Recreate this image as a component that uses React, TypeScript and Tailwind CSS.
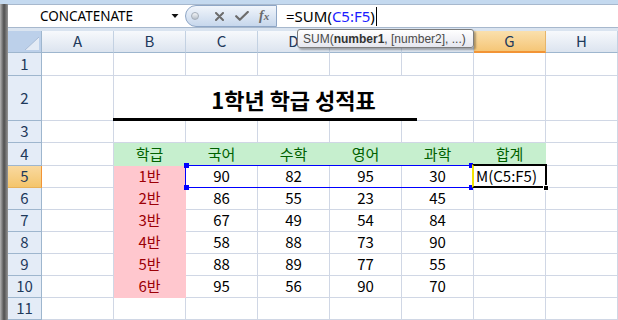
import React from 'react';

const cols = ['A', 'B', 'C', 'D', 'E', 'F', 'G', 'H'];
const subjects = ['학급', '국어', '수학', '영어', '과학', '합계'];
const scores: [string, number, number, number, number][] = [
  ['1반', 90, 82, 95, 30],
  ['2반', 86, 55, 23, 45],
  ['3반', 67, 49, 54, 84],
  ['4반', 58, 88, 73, 90],
  ['5반', 88, 89, 77, 55],
  ['6반', 95, 56, 90, 70],
];

type Tone = 'green' | 'pink' | undefined;

function Cell({ children, tone, className = '' }: { children?: React.ReactNode; tone?: Tone; className?: string }) {
  const toneCls =
    tone === 'green'
      ? 'bg-[#c6efce] text-[#006100] border-[#c6efce]'
      : tone === 'pink'
        ? 'bg-[#ffc7ce] text-[#9c0006] border-[#ffc7ce]'
        : 'bg-white text-black border-[#d0d7e5]';
  return (
    <div className={`flex items-center justify-center overflow-visible whitespace-nowrap border-r border-b ${toneCls} ${className}`}>
      {children}
    </div>
  );
}

function RowHead({ n, active }: { n: number; active?: boolean }) {
  return (
    <div
      className={`flex items-center justify-center border-r border-b text-[#1e395b] ${
        active
          ? 'bg-linear-to-b from-[#f9d99f] to-[#f4c56b] border-r-[#f29436] border-b-[#e8b25a]'
          : 'bg-[#e4ecf7] border-r-[#9eb6ce] border-b-[#9eb6ce]'
      }`}
    >
      {n}
    </div>
  );
}

export default function App() {
  return (
    <div className="relative h-[320px] w-[618px] overflow-hidden bg-[#dae4f0] font-['Noto_Sans_CJK_KR',sans-serif] text-[15px] select-none">
      <div className="h-[4px] bg-[#c4d9ef]" />
      <div className="flex h-[316px]">
        {/* window frame */}
        <div className="w-[8px] shrink-0 bg-linear-to-r from-[#b5b5b5] via-[#505050] to-[#979797]" />

        <div className="flex w-[610px] flex-col">
          {/* Formula bar */}
          <div className="flex h-[24px] shrink-0 border-y border-[#a7b8cd] bg-white">
            <div className="flex w-[177px] items-center">
              <span className="w-[157px] text-center font-['Noto_Sans',sans-serif] text-[13.5px] text-black">CONCATENATE</span>
              <svg width="20" height="6" viewBox="0 0 20 6">
                <path d="M6.5 1h7l-3.5 4z" fill="#111" />
              </svg>
            </div>
            <div className="flex h-full w-[92px] items-center rounded-l-full border border-[#8ea6c6] bg-linear-to-b from-[#f1f5fb] to-[#c7d7ec]">
              <span className="ml-[5px] h-[8px] w-[8px] rounded-full border border-[#a4adb8] bg-linear-to-b from-[#f4f6f8] to-[#b7c0ca]" />
              <svg className="ml-[16px]" width="9" height="9" viewBox="0 0 9 9">
                <path d="M1 1l7 7M8 1l-7 7" stroke="#6c6c6c" strokeWidth="2" strokeLinecap="round" />
              </svg>
              <svg className="ml-[11px]" width="14" height="10" viewBox="0 0 14 10">
                <path d="M1.2 5.2l3.6 3.6L12.8 1" stroke="#6c6c6c" strokeWidth="2.2" fill="none" strokeLinecap="round" strokeLinejoin="round" />
              </svg>
              <span className="ml-[10px] font-['Liberation_Serif',serif] text-[14px] italic font-bold leading-none text-[#6a6a6a]">
                f<span className="text-[11px]">x</span>
              </span>
            </div>
            <div className="flex flex-1 items-center pl-[9px] font-['Noto_Sans',sans-serif] text-[15px] text-black">
              =SUM(<span className="text-[#1c1cff]">C5:F5</span>)
              <span className="ml-[1px] h-[19px] w-[1px] bg-black" />
            </div>
          </div>
          <div className="h-[3px] shrink-0" />

          {/* Sheet */}
          <div className="relative grid grid-cols-[34px_repeat(8,72px)] grid-rows-[22px_23px_45px_22px_23px_repeat(7,22px)]">
            {/* corner */}
            <div className="relative border-r border-b border-r-[#9eb6ce] border-b-[#9eb6ce] bg-[#bcd0ea]">
              <svg className="absolute right-[2px] bottom-[2px]" width="14" height="13" viewBox="0 0 14 13">
                <path d="M14 0v13H0z" fill="#e4ebf5" />
                <path d="M14 0L0 13" stroke="#a9bcd6" strokeWidth="1" />
              </svg>
            </div>
            {cols.map((c) =>
              c === 'G' ? (
                <div
                  key={c}
                  className="flex items-center justify-center border-r border-b-2 border-r-[#e6b56a] border-b-[#f29436] bg-linear-to-b from-[#fae0ad] to-[#f5c677] text-[#1e395b]"
                >
                  {c}
                </div>
              ) : (
                <div
                  key={c}
                  className="flex items-center justify-center border-r border-b border-r-[#c3d1e2] border-b-[#9eb6ce] bg-linear-to-b from-[#f7f9fc] to-[#dce4ef] text-[#1e395b]"
                >
                  {c}
                </div>
              ),
            )}

            {/* Row 1 */}
            <RowHead n={1} />
            {cols.map((c) => (
              <Cell key={'1' + c} />
            ))}

            {/* Row 2 */}
            <RowHead n={2} />
            <Cell />
            <Cell className="relative col-span-5 pt-[2px] text-[22px] font-bold">
              1학년 학급 성적표
              <div className="absolute left-[-1px] bottom-[-1px] h-[3px] w-[304px] bg-black" />
            </Cell>
            <Cell />
            <Cell />

            {/* Row 3 */}
            <RowHead n={3} />
            {cols.map((c) => (
              <Cell key={'3' + c} />
            ))}

            {/* Row 4 */}
            <RowHead n={4} />
            <Cell />
            {subjects.map((s) => (
              <Cell key={s} tone="green">
                {s}
              </Cell>
            ))}
            <Cell />

            {/* Rows 5-10 */}
            {scores.map((r, i) => (
              <React.Fragment key={r[0]}>
                <RowHead n={i + 5} active={i === 0} />
                <Cell />
                <Cell tone="pink">{r[0]}</Cell>
                <Cell>{r[1]}</Cell>
                <Cell>{r[2]}</Cell>
                <Cell>{r[3]}</Cell>
                <Cell>{r[4]}</Cell>
                {i === 0 ? <Cell className="justify-start! pl-[2px]">M(C5:F5)</Cell> : <Cell />}
                <Cell />
              </React.Fragment>
            ))}

            {/* Row 11 */}
            <RowHead n={11} />
            {cols.map((c) => (
              <Cell key={'11' + c} />
            ))}

            {/* range reference highlight C5:F5 */}
            <div className="absolute left-[177px] top-[134px] h-[23px] w-[289px] border border-[#0000ff]" />
            <div className="absolute left-[176px] top-[132px] h-[5px] w-[5px] bg-[#0000ff]" />
            <div className="absolute left-[176px] top-[154px] h-[5px] w-[5px] bg-[#0000ff]" />
            <div className="absolute left-[461px] top-[132px] h-[5px] w-[4px] bg-[#0000ff]" />
            <div className="absolute left-[461px] top-[154px] h-[5px] w-[4px] bg-[#0000ff]" />

            {/* active cell G5 */}
            <div className="absolute left-[464px] top-[133px] h-[24px] w-[75px] border-2 border-black border-l-[#f2e400]" />
            <div className="absolute left-[535px] top-[154px] h-[6px] w-[6px] border border-white bg-black" />
          </div>
        </div>
      </div>

      {/* function tooltip */}
      <div className="absolute left-[297px] top-[29px] flex h-[19px] w-[177px] items-center rounded-[3px] border border-[#7d7d7d] bg-linear-to-b from-white to-[#e6e7ef] pl-[5px] font-['Liberation_Sans',sans-serif] text-[12px] text-[#4a4a4a] shadow-[2px_2px_2px_rgba(0,0,0,0.3)]">
        SUM(<b className="font-bold text-[#333]">number1</b>, [number2], ...)
      </div>
    </div>
  );
}
